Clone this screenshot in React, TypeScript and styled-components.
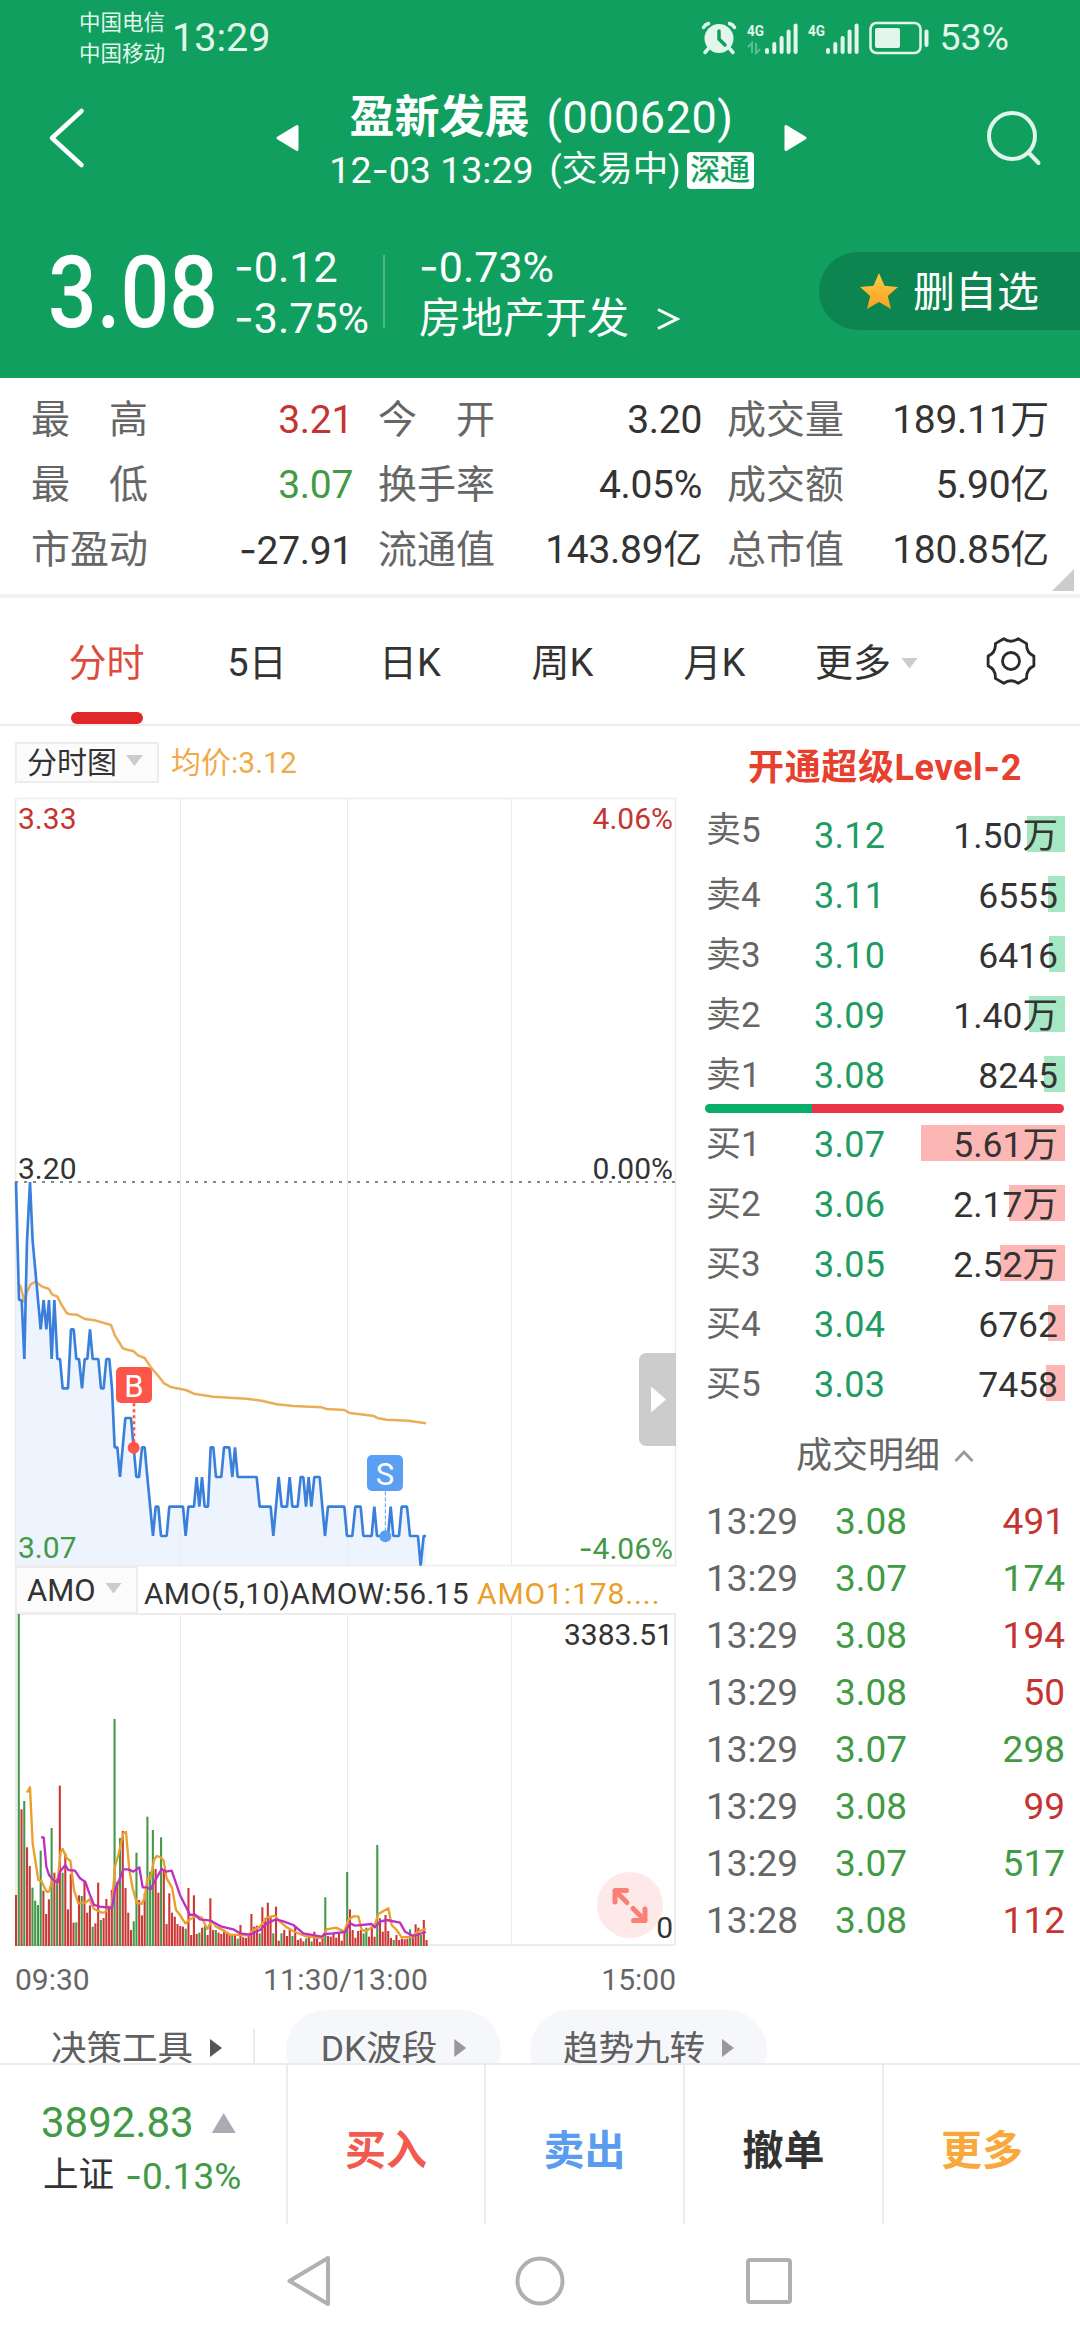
import React from "react";
import styled, { createGlobalStyle } from "styled-components";

const GlobalStyle = createGlobalStyle`
  * { box-sizing: border-box; }
  body {
    margin: 0;
    background: #fff;
    font-family: Roboto, "Noto Sans CJK SC", sans-serif;
    color: #333;
  }
  svg { display: block; flex: none; }
`;

const c = {
  green: "#119f60",
  line: "#ececec",
  label: "#666",
  text: "#333",
  up: "#c53431",
  down: "#429a45",
};

const Screen = styled.div`
  width: 1080px;
  height: 2340px;
  display: flex;
  flex-direction: column;
  overflow: hidden;
  background: #fff;
`;

const Txt = styled.span<{ $size: number; $color?: string; $ls?: number; $weight?: number; $lh?: number }>`
  font-size: ${(p) => p.$size}px;
  line-height: ${(p) => p.$lh ?? p.$size + 4}px;
  color: ${(p) => p.$color ?? "inherit"};
  letter-spacing: ${(p) => p.$ls ?? 0}px;
  font-weight: ${(p) => p.$weight ?? 400};
  white-space: nowrap;
`;

const Dash = styled.span`
  font-family: Inter, sans-serif;
`;

const Num = ({ v }: { v: string }) => (
  <>
    {v.split("-").map((part, i) => (
      <React.Fragment key={i}>
        {i > 0 && <Dash>-</Dash>}
        {part}
      </React.Fragment>
    ))}
  </>
);

/* ---------- header ---------- */

const Header = styled.header`
  height: 378px;
  background: ${c.green};
  color: #fff;
  display: flex;
  flex-direction: column;
`;

const StatusBar = styled.div`
  height: 76px;
  display: flex;
  align-items: center;
  padding: 0 71px 0 79px;
`;

const Carriers = styled.div`
  display: flex;
  flex-direction: column;
  width: 93px;
  color: #e2f6ec;
`;

const StatusRight = styled.div`
  margin-left: auto;
  display: flex;
  align-items: center;
  color: #e2f6ec;
  gap: 10px;
`;

const TitleBar = styled.div`
  height: 136px;
  display: flex;
  align-items: flex-start;
  justify-content: space-between;
  padding: 0 38px 0 48px;
`;

const TitleMid = styled.div`
  display: flex;
  align-items: center;
  justify-content: space-between;
  width: 534px;
  height: 124px;
  margin-left: 13px;
`;

const TitleText = styled.div`
  display: flex;
  flex-direction: column;
  align-items: center;
  padding-top: 10px;
`;

const TitleLine = styled.div<{ $h: number; $gap: number }>`
  height: ${(p) => p.$h}px;
  display: flex;
  align-items: center;
  gap: ${(p) => p.$gap}px;
`;

const Badge = styled.span`
  width: 67px;
  height: 37px;
  margin-left: -10px;
  border-radius: 4px;
  background: #fff;
  color: ${c.green};
  font-size: 30px;
  line-height: 36px;
  font-weight: 500;
  text-align: center;
`;

const SideIcon = styled.div`
  padding-top: 31px;
`;

const PriceBar = styled.div`
  display: flex;
  height: 166px;
  padding-left: 48px;
`;

const BigPrice = styled.div`
  width: 186px;
  height: 156px;
  font-size: 100px;
  line-height: 162px;
  font-weight: 500;
  white-space: nowrap;
  transform: scaleX(0.857);
  transform-origin: left center;
`;

const TwoLines = styled.div<{ $w: number }>`
  width: ${(p) => p.$w}px;
  padding-top: 29px;
  display: flex;
  flex-direction: column;
`;

const PriceDivider = styled.div`
  width: 2px;
  height: 73px;
  margin: 43px 34px 0 0;
  background: rgba(255, 255, 255, 0.25);
`;

const Sector = styled.div`
  display: flex;
  align-items: center;
  gap: 27px;
`;

const FavButton = styled.div`
  width: 261px;
  height: 78px;
  margin: 40px 0 0 auto;
  border-radius: 39px 0 0 39px;
  background: #0d8550;
  display: flex;
  align-items: center;
  gap: 14px;
  padding-left: 40px;
  & > span { padding-top: 4px; }
`;

/* ---------- stats ---------- */

const Stats = styled.section`
  height: 220px;
  padding: 10px 6px 0 31px;
  border-bottom: 4px solid #f2f2f2;
  display: grid;
  grid-template-columns: 322px 324px 322px;
  column-gap: 25px;
  grid-auto-rows: 65px;
  position: relative;
`;

const Stat = styled.div`
  display: flex;
  align-items: center;
  justify-content: space-between;
`;

const Corner = styled.div`
  position: absolute;
  right: 6px;
  bottom: 3px;
  width: 22px;
  height: 22px;
  background: #ccc;
  clip-path: polygon(100% 0, 100% 100%, 0 100%);
`;

/* ---------- tabs ---------- */

const Tabs = styled.nav`
  height: 128px;
  border-bottom: 2px solid ${c.line};
  display: grid;
  grid-template-columns: 149px 152px 154px 151px 153px 151px 138px;
  padding-left: 32px;
`;

const Tab = styled.div<{ $on?: boolean }>`
  height: 126px;
  display: flex;
  flex-direction: column;
  align-items: center;
  padding-top: 44px;
  color: ${(p) => (p.$on ? "#dd4b3e" : c.text)};
  font-size: 38px;
  line-height: 42px;
  white-space: nowrap;
  & > svg { margin-top: -7px; }
  &::after {
    content: "";
    width: 72px;
    height: 12px;
    margin-top: auto;
    border-radius: 6px;
    background: ${(p) => (p.$on ? "#df2827" : "transparent")};
  }
`;

const TabLine = styled.div`
  display: flex;
  align-items: center;
  gap: 10px;
`;

const Caret = styled.i<{ $w: number; $h: number; $color: string; $up?: boolean; $right?: boolean }>`
  display: block;
  flex: none;
  width: ${(p) => p.$w}px;
  height: ${(p) => p.$h}px;
  background: ${(p) => p.$color};
  clip-path: ${(p) =>
    p.$right
      ? "polygon(0 0, 100% 50%, 0 100%)"
      : p.$up
      ? "polygon(50% 0, 100% 100%, 0 100%)"
      : "polygon(0 0, 100% 0, 50% 100%)"};
`;

/* ---------- main ---------- */

const Main = styled.main`
  height: 1337px;
  display: flex;
  overflow: hidden;
`;

const Left = styled.section`
  width: 690px;
  padding-left: 15px;
  display: flex;
  flex-direction: column;
  & > * { flex-shrink: 0; }
`;

const Right = styled.section`
  width: 390px;
  padding: 0 15px 0 15px;
  display: flex;
  flex-direction: column;
`;

const ChartHead = styled.div<{ $h: number; $top: number }>`
  height: ${(p) => p.$h}px;
  padding-top: ${(p) => p.$top}px;
  display: flex;
  align-items: flex-start;
`;

const Picker = styled.div<{ $w: number; $h: number }>`
  width: ${(p) => p.$w}px;
  height: ${(p) => p.$h}px;
  border: 2px solid ${c.line};
  background: #fbfbfb;
  display: flex;
  align-items: center;
  justify-content: space-between;
  padding: 0 14px 0 10px;
  & > i { margin-bottom: 4px; }
`;

const Legend = styled.div<{ $pl: number; $h: number }>`
  height: ${(p) => p.$h}px;
  padding-left: ${(p) => p.$pl}px;
  display: flex;
  align-items: center;
  gap: 8px;
`;

const ChartBox = styled.div<{ $h: number }>`
  position: relative;
  width: 661px;
  height: ${(p) => p.$h}px;
  svg { overflow: visible; }
`;

const AxisLabel = styled.span<{ $y: number; $right?: boolean; $color: string }>`
  position: absolute;
  top: ${(p) => p.$y}px;
  ${(p) => (p.$right ? "right: 3px;" : "left: 3px;")}
  font-size: 30px;
  line-height: 30px;
  color: ${(p) => p.$color};
  white-space: nowrap;
`;

const Marker = styled.span<{ $x: number; $y: number; $color: string }>`
  position: absolute;
  left: ${(p) => p.$x}px;
  top: ${(p) => p.$y}px;
  width: 36px;
  height: 36px;
  border-radius: 5px;
  background: ${(p) => p.$color};
  color: #fff;
  font-size: 31px;
  line-height: 39px;
  text-align: center;
`;

const Handle = styled.div`
  position: absolute;
  right: 0;
  top: 555px;
  width: 37px;
  height: 93px;
  border-radius: 7px 0 0 7px;
  background: #ccc;
  display: flex;
  align-items: center;
  padding-left: 12px;
`;

const Expand = styled.div`
  position: absolute;
  left: 582px;
  top: 259px;
  width: 66px;
  height: 66px;
  border-radius: 50%;
  background: #fde9e7;
`;

const TimeAxis = styled.div`
  width: 661px;
  height: 64px;
  padding-top: 17px;
  display: grid;
  grid-template-columns: 1fr auto 1fr;
  color: ${c.label};
  & > :last-child { text-align: right; }
`;

const Tools = styled.div`
  display: flex;
  align-items: flex-start;
  color: #606060;
`;

const Tool = styled.div<{ $w: number; $ml: number; $pill?: boolean }>`
  flex: none;
  width: ${(p) => p.$w}px;
  height: 80px;
  margin-left: ${(p) => p.$ml}px;
  border-radius: 40px;
  background: ${(p) => (p.$pill ? "#f6f7fb" : "transparent")};
  display: flex;
  align-items: center;
  justify-content: center;
  gap: 17px;
  & > i { margin-bottom: 4px; }
`;

const ToolDivider = styled.div`
  flex: none;
  width: 2px;
  height: 60px;
  margin: 19px 0 0 30px;
  background: ${c.line};
`;

const Level2 = styled.div`
  height: 90px;
  padding-top: 20px;
  text-align: center;
`;

const BookRow = styled.div`
  height: 60px;
  display: grid;
  grid-template-columns: 108px 90px 1fr;
  align-items: start;
  padding-left: 1px;
`;

const BookLabel = styled(Txt)<{ $lift?: number }>`
  margin-top: ${(p) => -(p.$lift ?? 0)}px;
`;

const Volume = styled.div`
  position: relative;
  height: 36px;
  text-align: right;
  padding-right: 7px;
`;

const Tint = styled.i<{ $w: number; $color: string }>`
  position: absolute;
  right: 0;
  top: 0;
  width: ${(p) => p.$w}px;
  height: 36px;
  background: ${(p) => p.$color};
`;

const Over = styled(Txt)`
  position: relative;
`;

const Ratio = styled.div`
  width: 359px;
  height: 9px;
  margin: -12px 0 12px;
  border-radius: 5px;
  background: linear-gradient(to right, #07ae68 107px, #ea3448 107px);
`;

const DetailHead = styled.div`
  height: 75px;
  margin-top: -7px;
  display: flex;
  align-items: center;
  justify-content: center;
  gap: 14px;
  color: ${c.label};
`;

const TradeRow = styled.div`
  height: 57px;
  display: grid;
  grid-template-columns: 129px 90px 1fr;
  align-items: center;
  padding-left: 1px;
  & > :last-child { text-align: right; }
`;

/* ---------- footer ---------- */

const Footer = styled.footer`
  height: 161px;
  border-top: 2px solid ${c.line};
  display: grid;
  grid-template-columns: 286px 198px 199px 199px 198px;
`;

const Index = styled.div`
  padding: 33px 0 0 41px;
  display: flex;
  flex-direction: column;
`;

const IndexLine = styled.div<{ $h: number; $gap: number; $pl?: number }>`
  height: ${(p) => p.$h}px;
  display: flex;
  align-items: center;
  gap: ${(p) => p.$gap}px;
  padding-left: ${(p) => p.$pl ?? 0}px;
`;

const Action = styled.div<{ $color: string }>`
  border-left: 2px solid ${c.line};
  color: ${(p) => p.$color};
  font-size: 41px;
  font-weight: 700;
  display: flex;
  align-items: center;
  justify-content: center;
  padding-top: 5px;
`;

const NavBar = styled.div`
  flex: 1;
  display: grid;
  grid-template-columns: 309px 433px 1fr;
  padding-top: 30px;
`;

const NavSlot = styled.div<{ $pl: number }>`
  padding-left: ${(p) => p.$pl}px;
`;

/* ---------- data ---------- */

const stats = [
  ["最　高", "3.21", c.up], ["今　开", "3.20", c.text], ["成交量", "189.11万", c.text],
  ["最　低", "3.07", c.down], ["换手率", "4.05%", c.text], ["成交额", "5.90亿", c.text],
  ["市盈动", "-27.91", c.text], ["流通值", "143.89亿", c.text], ["总市值", "180.85亿", c.text],
];

const asks: [string, string, string, number][] = [
  ["卖5", "3.12", "1.50万", 38], ["卖4", "3.11", "6555", 17], ["卖3", "3.10", "6416", 16],
  ["卖2", "3.09", "1.40万", 36], ["卖1", "3.08", "8245", 21],
];
const bids: [string, string, string, number][] = [
  ["买1", "3.07", "5.61万", 144], ["买2", "3.06", "2.17万", 56], ["买3", "3.05", "2.52万", 65],
  ["买4", "3.04", "6762", 17], ["买5", "3.03", "7458", 19],
];
const trades: [string, string, string, boolean][] = [
  ["13:29", "3.08", "491", true], ["13:29", "3.07", "174", false], ["13:29", "3.08", "194", true],
  ["13:29", "3.08", "50", true], ["13:29", "3.07", "298", false], ["13:29", "3.08", "99", true],
  ["13:29", "3.07", "517", false], ["13:28", "3.08", "112", true],
];

const priceLine =
  "48,36 57,390 65,390 73,567 81,213 90,36 98,213 106,301 114,390 122,478 131,390 139,478 147,390 155,567 163,390 172,567 180,567 188,655 204,655 213,478 221,478 229,567 237,567 246,655 254,567 262,567 270,478 278,567 295,567 303,655 311,655 319,567 328,567 336,655 344,832 352,832 360,921 376,744 393,744 401,832 409,921 417,921 426,832 434,832 442,921 459,1098 467,1010 475,1010 483,1098 500,1098 508,1010 549,1010 557,1098 565,1010 582,1010 590,921 598,1010 606,921 614,1010 624,1010 632,832 640,832 648,921 664,921 672,832 688,832 697,921 705,832 713,921 770,921 779,1010 812,1010 820,1098 836,921 845,1010 861,1010 869,921 877,1010 893,1010 902,921 910,921 918,1010 926,921 934,1010 943,921 959,921 967,1010 975,1098 984,1010 1033,1010 1041,1098 1057,1098 1066,1010 1082,1010 1090,1098 1115,1098 1123,1010 1131,1098 1164,1098 1172,1010 1180,1098 1197,1098 1205,1010 1221,1010 1230,1098 1254,1098 1262,1187 1271,1098 1278,1098";
const avgLine =
  "55,340 62,350 73,395 81,365 92,343 104,336 115,341 125,349 147,357 156,373 172,380 184,403 200,429 210,433 230,434 255,447 285,451 333,465 345,497 368,534 380,539 400,543 414,556 434,564 455,595 475,618 492,640 515,652 557,660 582,671 640,680 740,686 785,692 830,703 880,708 965,712 980,717 1033,720 1049,729 1118,737 1135,745 1160,749 1225,752 1278,760";
const amo1 =
  "81,728 90,712 98,880 115,990 125,995 133,1012 141,1026 148,1024 158,985 172,1000 182,905 188,897 200,925 211,932 222,1020 235,1060 258,1057 268,1048 282,1077 305,1088 315,1087 325,1070 335,1072 345,950 355,915 370,850 378,846 388,960 398,1015 410,1058 425,1062 434,1045 442,985 452,985 462,930 470,918 482,922 491,932 500,985 516,1013 528,1080 540,1095 556,1120 570,1108 590,1098 605,1103 622,1137 635,1112 648,1130 672,1142 690,1154 745,1156 760,1140 780,1130 800,1103 825,1097 840,1115 860,1132 885,1146 915,1158 965,1164 980,1138 1008,1133 1033,1145 1045,1110 1060,1099 1075,1099 1085,1140 1098,1143 1123,1128 1135,1092 1165,1075 1175,1125 1190,1140 1205,1162 1235,1160 1250,1148 1278,1135";
const amo2 =
  "123,862 131,862 139,950 147,975 158,988 172,998 180,965 196,945 205,960 225,962 240,985 256,996 268,1030 282,1065 300,1070 336,1074 345,1020 360,985 370,958 385,958 400,965 418,952 428,1012 440,1012 452,1018 465,992 485,957 498,965 515,962 540,1035 555,1065 570,1095 585,1094 600,1108 632,1112 665,1130 700,1138 720,1150 750,1154 780,1140 800,1120 828,1108 850,1114 880,1125 910,1150 965,1160 975,1152 1000,1150 1035,1146 1050,1120 1065,1127 1115,1122 1125,1132 1140,1115 1160,1110 1200,1118 1215,1145 1240,1158 1278,1146";

/* one entry per minute: top of the bar, "g" marks a falling minute */
const bars =
  "1035 192g 778 753g 892 948 1013g 1052g 1065g 902g 1022 1092 1048 834g 968 985g 707 968g 910 1078 972 1118 1117g 1036 1038g 992 1088 1066 1130g 1120 998 1110g 1104 1047 1075 1020 507g 995 864g 843 1014 1088 1140 1114g 908g 1050 1096 1030 800g 965g 840g 957 1028 862g 958 1122 1030 1088 1100 1122 1128 1130 1136g 1014 1155 1036 1152 1148g 1133 1128g 1155 1045 1140 1140g 1148 1152 1145 1150 1154 1156g 1152 1166g 1125 1162 1164 1155 1092 1130 1127 1150g 1072 1105 1058 1100 1150g 1070 1172 1150g 1140 1158 1140 1158g 1130 1170 1165 1174 1165g 1160 1174g 1145 1163 1176 1160 1042g 1158 1160 1148 1163 1150 1172 1145 966g 1078 1140 1163 1143 1140 1150g 1133g 1160 1130 1160 885g 1105 1145 1095 1143 1164 1170g 1155 1170 1166 1168 1166 1138g 1162 1123 1133 1155g 1110 1170"
    .split(" ")
    .map((s) => ({ top: parseInt(s, 10), down: s.endsWith("g") }));

const polar = (r: number, deg: number) => {
  const a = (deg * Math.PI) / 180;
  return `${(26 + r * Math.cos(a)).toFixed(2)} ${(26 + r * Math.sin(a)).toFixed(2)}`;
};
const gearPath =
  [0, 60, 120, 180, 240, 300]
    .map((a, i) => `${i ? "L" : "M"}${polar(23.4, a - 12)} L${polar(23.4, a + 12)} Q${polar(17.2, a + 30)} ${polar(23.4, a + 48)}`)
    .join(" ") + "Z";

const Signal = ({ data }: { data?: boolean }) => (
  <svg width="51" height="36" viewBox="0 -2 51 36">
    <text x="0" y="14" fontSize="15.500" fontWeight="700" fill="#e2f6ec" textLength="17" lengthAdjust="spacingAndGlyphs">4G</text>
    {data && (
      <g stroke="#e2f6ec" strokeOpacity="0.35" strokeWidth="2" fill="none">
        <path d="M5 31V21l-4 4" />
        <path d="M9 21v10l4-4" />
      </g>
    )}
    {[[18, 26], [25.3, 20], [32.6, 14], [39.6, 7.5], [46.6, 1.5]].map(([x, y]) => (
      <rect key={x} x={x} y={y} width="4" height={32 - y} rx="2" fill="#e2f6ec" />
    ))}
  </svg>
);

const Book = ({ rows, tint, lift }: { rows: [string, string, string, number][]; tint: string; lift?: boolean }) => (
  <>
    {rows.map(([name, price, vol, w], i) => (
      <BookRow key={name}>
        <BookLabel $size={35} $lh={40} $color={c.label} $lift={lift && i === 0 ? 5 : 0}>{name}</BookLabel>
        <Txt $size={36} $lh={41} $ls={0.3} $color="#1f9b63">{price}</Txt>
        <Volume>
          <Tint $w={w} $color={tint} />
          <Over $size={35.5} $lh={41}>{vol}</Over>
        </Volume>
      </BookRow>
    ))}
  </>
);

export default function App() {
  return (
    <Screen>
      <GlobalStyle />
      <Header>
        <StatusBar>
          <Carriers>
            <Txt $size={21.5} $lh={31}>中国电信</Txt>
            <Txt $size={21.5} $lh={31}>中国移动</Txt>
          </Carriers>
          <Txt $size={39.5} $color="#e2f6ec">13:29</Txt>
          <StatusRight>
            <svg width="36" height="34" viewBox="0 0 36 34">
              <circle cx="18" cy="17.5" r="14.5" fill="#e2f6ec" />
              <path d="M18 10v8l6 6" stroke={c.green} strokeWidth="3.5" fill="none" strokeLinecap="round" />
              <path d="M2.5 6.500Q4 3.500 7.500 2.500M33.500 6.500Q32 3.500 28.500 2.500M7 28l-3 3.500M29 28l3 3.500" stroke="#e2f6ec" strokeWidth="3.500" fill="none" strokeLinecap="round" />
            </svg>
            <Signal data />
            <Signal />
            <svg width="60" height="34" viewBox="0 0 60 34">
              <rect x="1.500" y="2" width="50" height="30" rx="6" fill="none" stroke="#e2f6ec" strokeWidth="2.500" />
              <rect x="6" y="7" width="25" height="20" rx="2" fill="#e2f6ec" />
              <rect x="55.500" y="8.500" width="4" height="17.500" rx="2" fill="#e2f6ec" />
            </svg>
            <Txt $size={37.5}>53%</Txt>
          </StatusRight>
        </StatusBar>
        <TitleBar>
          <SideIcon>
            <svg width="38" height="62" viewBox="0 0 38 62">
              <path d="M33.500 4L4 31l29.500 27" fill="none" stroke="#fff" strokeWidth="4.500" strokeLinecap="round" strokeLinejoin="round" />
            </svg>
          </SideIcon>
          <TitleMid>
            <svg width="24" height="28" viewBox="0 0 24 28">
              <path d="M22 2.500v23L3 14z" fill="#fff" stroke="#fff" strokeWidth="3" strokeLinejoin="round" />
            </svg>
            <TitleText>
              <TitleLine $h={54} $gap={17}>
                <Txt $size={45} $weight={700}>盈新发展</Txt>
                <Txt $size={45} $ls={0.5}>(000620)</Txt>
              </TitleLine>
              <TitleLine $h={52} $gap={16}>
                <Txt $size={37.5}><Num v="12-03 13:29" /></Txt>
                <Txt $size={35.5}>(交易中)</Txt>
                <Badge>深通</Badge>
              </TitleLine>
            </TitleText>
            <svg width="24" height="28" viewBox="0 0 24 28">
              <path d="M2 2.500v23L21 14z" fill="#fff" stroke="#fff" strokeWidth="3" strokeLinejoin="round" />
            </svg>
          </TitleMid>
          <SideIcon>
            <svg width="58" height="60" viewBox="0 0 58 60">
              <circle cx="28" cy="29" r="23" fill="none" stroke="#dff4ea" strokeWidth="4" />
              <path d="M45 46l9.500 10" stroke="#dff4ea" strokeWidth="4" strokeLinecap="round" />
            </svg>
          </SideIcon>
        </TitleBar>
        <PriceBar>
          <BigPrice>3.08</BigPrice>
          <TwoLines $w={149}>
            <Txt $size={43} $lh={50}><Num v="-0.12" /></Txt>
            <Txt $size={43} $lh={50}><Num v="-3.75%" /></Txt>
          </TwoLines>
          <PriceDivider />
          <TwoLines $w={320}>
            <Txt $size={43} $lh={50}><Num v="-0.73%" /></Txt>
            <Sector>
              <Txt $size={42} $lh={53}>房地产开发</Txt>
              <svg width="24" height="22" viewBox="0 0 24 22">
                <path d="M2 1.500L21 11 2 20.500" fill="none" stroke="#fff" strokeWidth="3" />
              </svg>
            </Sector>
          </TwoLines>
          <FavButton>
            <svg width="40" height="38" viewBox="0 0 40 38">
              <defs>
                <linearGradient id="star" x1="0" y1="0" x2="0" y2="1">
                  <stop offset="0" stopColor="#fdcb45" />
                  <stop offset="1" stopColor="#fba01f" />
                </linearGradient>
              </defs>
              <path d="M20 1l5.500 12.800L39 15l-10.200 9 3.200 13L20 30 8 37l3.200-13L1 15l13.500-1.200z" fill="url(#star)" />
            </svg>
            <Txt $size={42}>删自选</Txt>
          </FavButton>
        </PriceBar>
      </Header>

      <Stats>
        {stats.map(([k, v, color]) => (
          <Stat key={k}>
            <Txt $size={39} $color={c.label}>{k}</Txt>
            <Txt $size={39} $ls={-0.3} $color={color}><Num v={v} /></Txt>
          </Stat>
        ))}
        <Corner />
      </Stats>

      <Tabs>
        <Tab $on>分时</Tab>
        <Tab>5日</Tab>
        <Tab>日K</Tab>
        <Tab>周K</Tab>
        <Tab>月K</Tab>
        <Tab>
          <TabLine>
            更多
            <Caret $w={17} $h={11} $color="#ccc" />
          </TabLine>
        </Tab>
        <Tab>
          <svg width="52" height="52" viewBox="0 0 52 52">
            <path d={gearPath} fill="none" stroke="#2b2b2b" strokeWidth="2.800" strokeLinejoin="round" />
            <circle cx="26" cy="26" r="8.500" fill="none" stroke="#2b2b2b" strokeWidth="2.800" />
          </svg>
        </Tab>
      </Tabs>

      <Main>
        <Left>
          <ChartHead $h={72} $top={16}>
            <Picker $w={144} $h={41}>
              <Txt $size={30}>分时图</Txt>
              <Caret $w={17} $h={11} $color="#ccc" />
            </Picker>
            <Legend $pl={12} $h={42}>
              <Txt $size={30} $color="#efab4a">均价:3.12</Txt>
            </Legend>
          </ChartHead>
          <ChartBox $h={768}>
            <svg width="661" height="768" viewBox="0 0 661 768">
              <g transform="translate(-15 372) scale(0.33333)">
                <polygon points={`48,1187 ${priceLine} 1278,1187`} fill="#edf4fe" />
              </g>
              <rect x="0.500" y="0.500" width="660" height="767" fill="none" stroke={c.line} strokeWidth="1.500" />
              {[165.5, 332.5, 496.5].map((x) => (
                <path key={x} d={`M${x} 0V768`} stroke={c.line} />
              ))}
              <path d="M0 384H660" stroke="#888" strokeWidth="2" strokeDasharray="3 6" />
              <g transform="translate(-15 372) scale(0.33333)" fill="none" strokeLinejoin="round">
                <polyline points={avgLine} stroke="#eaad57" strokeWidth="7.500" />
                <polyline points={priceLine} stroke="#3a80db" strokeWidth="8" strokeLinejoin="miter" strokeMiterlimit="1" />
                <path d="M402 700V833" stroke="#fc564b" strokeWidth="8" strokeDasharray="9 9" />
                <circle cx="401" cy="833" r="18" fill="#fc564b" />
                <path d="M1156 964V1099" stroke="#5b9ff2" strokeWidth="3" strokeDasharray="12 6" />
                <circle cx="1156" cy="1099" r="18" fill="#5b9ff2" />
              </g>
            </svg>
            <AxisLabel $y={6} $color={c.up}>3.33</AxisLabel>
            <AxisLabel $y={6} $color={c.up} $right>4.06%</AxisLabel>
            <AxisLabel $y={356} $color={c.text}>3.20</AxisLabel>
            <AxisLabel $y={356} $color={c.text} $right>0.00%</AxisLabel>
            <AxisLabel $y={735} $color={c.down}>3.07</AxisLabel>
            <AxisLabel $y={735} $color={c.down} $right><Num v="-4.06%" /></AxisLabel>
            <Marker $x={101} $y={569} $color="#fc564b">B</Marker>
            <Marker $x={352} $y={657} $color="#5b9ff2">S</Marker>
            <Handle><Caret $w={15} $h={26} $color="#fff" $right /></Handle>
          </ChartBox>
          <ChartHead $h={47} $top={0}>
            <Picker $w={123} $h={48}>
              <Txt $size={31}>AMO</Txt>
              <Caret $w={17} $h={11} $color="#ccc" />
            </Picker>
            <Legend $pl={6} $h={56}>
              <Txt $size={30} $ls={0.3}>AMO(5,10)AMOW:56.15</Txt>
              <Txt $size={30} $ls={0.9} $color="#ea9f2a">AMO1:178....</Txt>
            </Legend>
          </ChartHead>
          <ChartBox $h={333}>
            <svg width="661" height="333" viewBox="0 0 661 333">
              <rect x="1" y="1" width="659" height="331" fill="none" stroke={c.line} strokeWidth="2" />
              {[165.5, 332.5, 496.5].map((x) => (
                <path key={x} d={`M${x} 0V332`} stroke={c.line} />
              ))}
              <g transform="translate(-15 -63) scale(0.33333)">
                {bars.map((b, i) => (
                  <rect key={i} x={45 + i * 8.21} y={b.top} width="6.300" height={1188 - b.top} fill={b.down ? "#46994a" : "#cb3836"} />
                ))}
                <polyline points={amo1} fill="none" stroke="#ea9f2a" strokeWidth="7" strokeLinejoin="round" />
                <polyline points={amo2} fill="none" stroke="#c02fc4" strokeWidth="7" strokeLinejoin="round" />
              </g>
            </svg>
            <AxisLabel $y={7} $color={c.text} $right>3383.51</AxisLabel>
            <Expand>
              <svg width="66" height="66" viewBox="0 0 66 66" fill="none" stroke="#fa8077" strokeWidth="5" strokeLinecap="round" strokeLinejoin="round">
                <path d="M29.500 18.500H18v11.500M18.500 19L30 30.500" />
                <path d="M36.500 48.500H48V37M47.500 48L36 36.500" />
              </svg>
            </Expand>
            <AxisLabel $y={300} $color={c.text} $right>0</AxisLabel>
          </ChartBox>
          <TimeAxis>
            <Txt $size={30}>09:30</Txt>
            <Txt $size={30} $ls={0.3}>11:30/13:00</Txt>
            <Txt $size={30}>15:00</Txt>
          </TimeAxis>
          <Tools>
            <Tool $w={173} $ml={35}>
              <Txt $size={35.5}>决策工具</Txt>
              <Caret $w={12} $h={18} $color="#555" $right />
            </Tool>
            <ToolDivider />
            <Tool $w={215} $ml={31} $pill>
              <Txt $size={35.5}>DK波段</Txt>
              <Caret $w={12} $h={18} $color="#999" $right />
            </Tool>
            <Tool $w={237} $ml={29} $pill>
              <Txt $size={35.5}>趋势九转</Txt>
              <Caret $w={12} $h={18} $color="#999" $right />
            </Tool>
          </Tools>
        </Left>

        <Right>
          <Level2>
            <Txt $size={36} $weight={700} $color="#e8402f" $lh={42} $ls={0.6}><Num v="开通超级Level-2" /></Txt>
          </Level2>
          <Book rows={asks} tint="#a6e7c3" lift />
          <Ratio />
          <Book rows={bids} tint="#fcb7b5" />
          <DetailHead>
            <Txt $size={36}>成交明细</Txt>
            <svg width="20" height="14" viewBox="0 0 20 14">
              <path d="M1.500 12L10 3l8.500 9" fill="none" stroke="#999" strokeWidth="2.800" />
            </svg>
          </DetailHead>
          {trades.map(([t, p, v, up], i) => (
            <TradeRow key={i}>
              <Txt $size={37} $color={c.label}>{t}</Txt>
              <Txt $size={37} $color={c.down}>{p}</Txt>
              <Txt $size={37} $color={up ? c.up : c.down}>{v}</Txt>
            </TradeRow>
          ))}
        </Right>
      </Main>

      <Footer>
        <Index>
          <IndexLine $h={50} $gap={18}>
            <Txt $size={42} $color={c.down}>3892.83</Txt>
            <Caret $w={24} $h={20} $color="#a8adb4" $up />
          </IndexLine>
          <IndexLine $h={55} $gap={11} $pl={2}>
            <Txt $size={35.5}>上证</Txt>
            <Txt $size={37} $color={c.down}><Num v="-0.13%" /></Txt>
          </IndexLine>
        </Index>
        <Action $color="#f25a50">买入</Action>
        <Action $color="#5a9cf0">卖出</Action>
        <Action $color="#333">撤单</Action>
        <Action $color="#f9a93c">更多</Action>
      </Footer>

      <NavBar>
        <NavSlot $pl={285}>
          <svg width="50" height="54" viewBox="0 0 50 54">
            <path d="M43 4v46L4.500 27z" fill="none" stroke="#b0b0b0" strokeWidth="4" strokeLinejoin="round" />
          </svg>
        </NavSlot>
        <NavSlot $pl={204}>
          <svg width="54" height="54" viewBox="0 0 54 54">
            <circle cx="27" cy="27" r="22.500" fill="none" stroke="#b0b0b0" strokeWidth="4" />
          </svg>
        </NavSlot>
        <NavSlot $pl={0}>
          <svg width="54" height="54" viewBox="0 0 54 54">
            <rect x="6" y="6" width="42" height="42" rx="2" fill="none" stroke="#b0b0b0" strokeWidth="4" />
          </svg>
        </NavSlot>
      </NavBar>
    </Screen>
  );
}
